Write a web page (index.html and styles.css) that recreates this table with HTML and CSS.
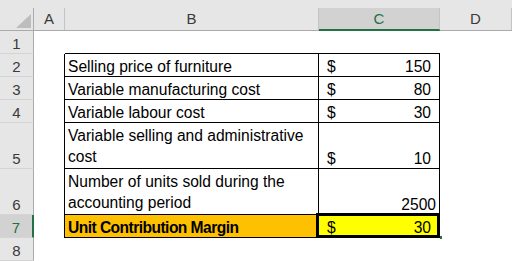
FILE: index.html
```html
<!DOCTYPE html>
<html>
<head>
<meta charset="utf-8">
<link rel="stylesheet" href="styles.css">
</head>
<body>
<div class="sheet">
  <div class="colhead corner"><div class="lbl"><svg class="tri" width="15" height="14" viewBox="0 0 15 14"><polygon points="15,0 15,14 0,14" fill="#bdbdbd"/></svg></div></div>
  <div class="colhead"><div class="lbl">A</div></div>
  <div class="colhead"><div class="lbl">B</div></div>
  <div class="colhead selcol"><div class="lbl">C</div></div>
  <div class="colhead"><div class="lbl">D</div></div>

  <div class="rowhead">1</div>
  <div class="cell"></div>
  <div class="cell bb"></div>
  <div class="cell bb"></div>
  <div class="cell"></div>

  <div class="rowhead">2</div>
  <div class="cell br"></div>
  <div class="cell txt bb br">Selling price of furniture</div>
  <div class="cell acc bb br"><span>$</span><span>150</span></div>
  <div class="cell"></div>

  <div class="rowhead">3</div>
  <div class="cell br"></div>
  <div class="cell txt bb br">Variable manufacturing cost</div>
  <div class="cell acc bb br"><span>$</span><span>80</span></div>
  <div class="cell"></div>

  <div class="rowhead">4</div>
  <div class="cell br"></div>
  <div class="cell txt bb br">Variable labour cost</div>
  <div class="cell acc bb br"><span>$</span><span>30</span></div>
  <div class="cell"></div>

  <div class="rowhead">5</div>
  <div class="cell br"></div>
  <div class="cell txt wrap bb br">Variable selling and administrative cost</div>
  <div class="cell acc bb br"><span>$</span><span>10</span></div>
  <div class="cell"></div>

  <div class="rowhead">6</div>
  <div class="cell br"></div>
  <div class="cell txt wrap bb br">Number of units sold during the accounting period</div>
  <div class="cell num bb br">2500</div>
  <div class="cell"></div>

  <div class="rowhead selrow">7</div>
  <div class="cell br"></div>
  <div class="cell txt strong orange bb br">Unit Contribution Margin</div>
  <div class="cell acc yellow active bb br"><span>$</span><span>30</span></div>
  <div class="cell"></div>

  <div class="rowhead">8</div>
  <div class="cell"></div>
  <div class="cell"></div>
  <div class="cell"></div>
  <div class="cell"></div>
</div>
</body>
</html>
```
FILE: styles.css
```css
html, body {
  margin: 0;
  padding: 0;
  background: #ffffff;
}
body {
  width: 512px;
  height: 261px;
  overflow: hidden;
  font-family: "Liberation Sans", Arial, sans-serif;
  font-size: 15.6px;
  color: #000;
}
.sheet {
  display: grid;
  grid-template-columns: 34px 31px 254px 121px 1fr;
  grid-template-rows: 31px 23px 23px 23px 23px 46px 46px 23px 23px;
  width: 512px;
}
.colhead {
  background: #e6e6e6;
  padding-top: 8px;
  border-bottom: 1px solid #ababab;
  display: flex;
  box-sizing: border-box;
}
.colhead .lbl {
  flex: 1;
  display: flex;
  align-items: center;
  justify-content: center;
  border-right: 1px solid #c4c4c4;
  line-height: 22px;
  font-size: 15px;
  color: #3a3a3a;
}
.corner .lbl {
  justify-content: flex-end;
  align-items: flex-end;
  padding: 0 2px 2px 0;
  border-right-color: #ababab;
}
.tri {
  display: block;
}
.selcol {
  border-bottom-color: #217346;
}
.selcol .lbl {
  background: #d2d2d2;
  border-bottom: 1px solid #217346;
  color: #217346;
}
.rowhead {
  background: #e6e6e6;
  border-right: 1px solid #ababab;
  border-bottom: 1px solid #d4d4d4;
  display: flex;
  align-items: flex-end;
  justify-content: center;
  font-size: 15px;
  line-height: 19px;
  color: #3a3a3a;
  box-sizing: border-box;
}
.rowhead.selrow {
  background: #d2d2d2;
  border-right: 2px solid #217346;
  color: #217346;
}
.cell {
  box-sizing: border-box;
  line-height: 19px;
  white-space: nowrap;
}
.br {
  border-right: 1px solid #000;
}
.bb {
  border-bottom: 1px solid #000;
}
.txt {
  display: flex;
  align-items: flex-end;
  padding-left: 3px;
}
.wrap {
  white-space: normal;
  line-height: 21px;
  display: block;
  padding-top: 2px;
  padding-right: 4px;
}
.strong {
  font-weight: bold;
  letter-spacing: -0.55px;
}
.acc {
  display: flex;
  justify-content: space-between;
  align-items: flex-end;
  padding: 0 8px 0 8px;
}
.num {
  display: flex;
  justify-content: flex-end;
  align-items: flex-end;
  padding-right: 3px;
}
.orange {
  background: #ffc000;
}
.yellow {
  background: #ffff00;
}
.active {
  position: relative;
}
.active::before {
  content: "";
  position: absolute;
  left: -3px;
  top: -2px;
  right: -1px;
  bottom: -1px;
  border: 3px solid #000;
}
.active::after {
  content: "";
  position: absolute;
  right: -3px;
  bottom: -2px;
  width: 2px;
  height: 3px;
  background: #217346;
}
```
